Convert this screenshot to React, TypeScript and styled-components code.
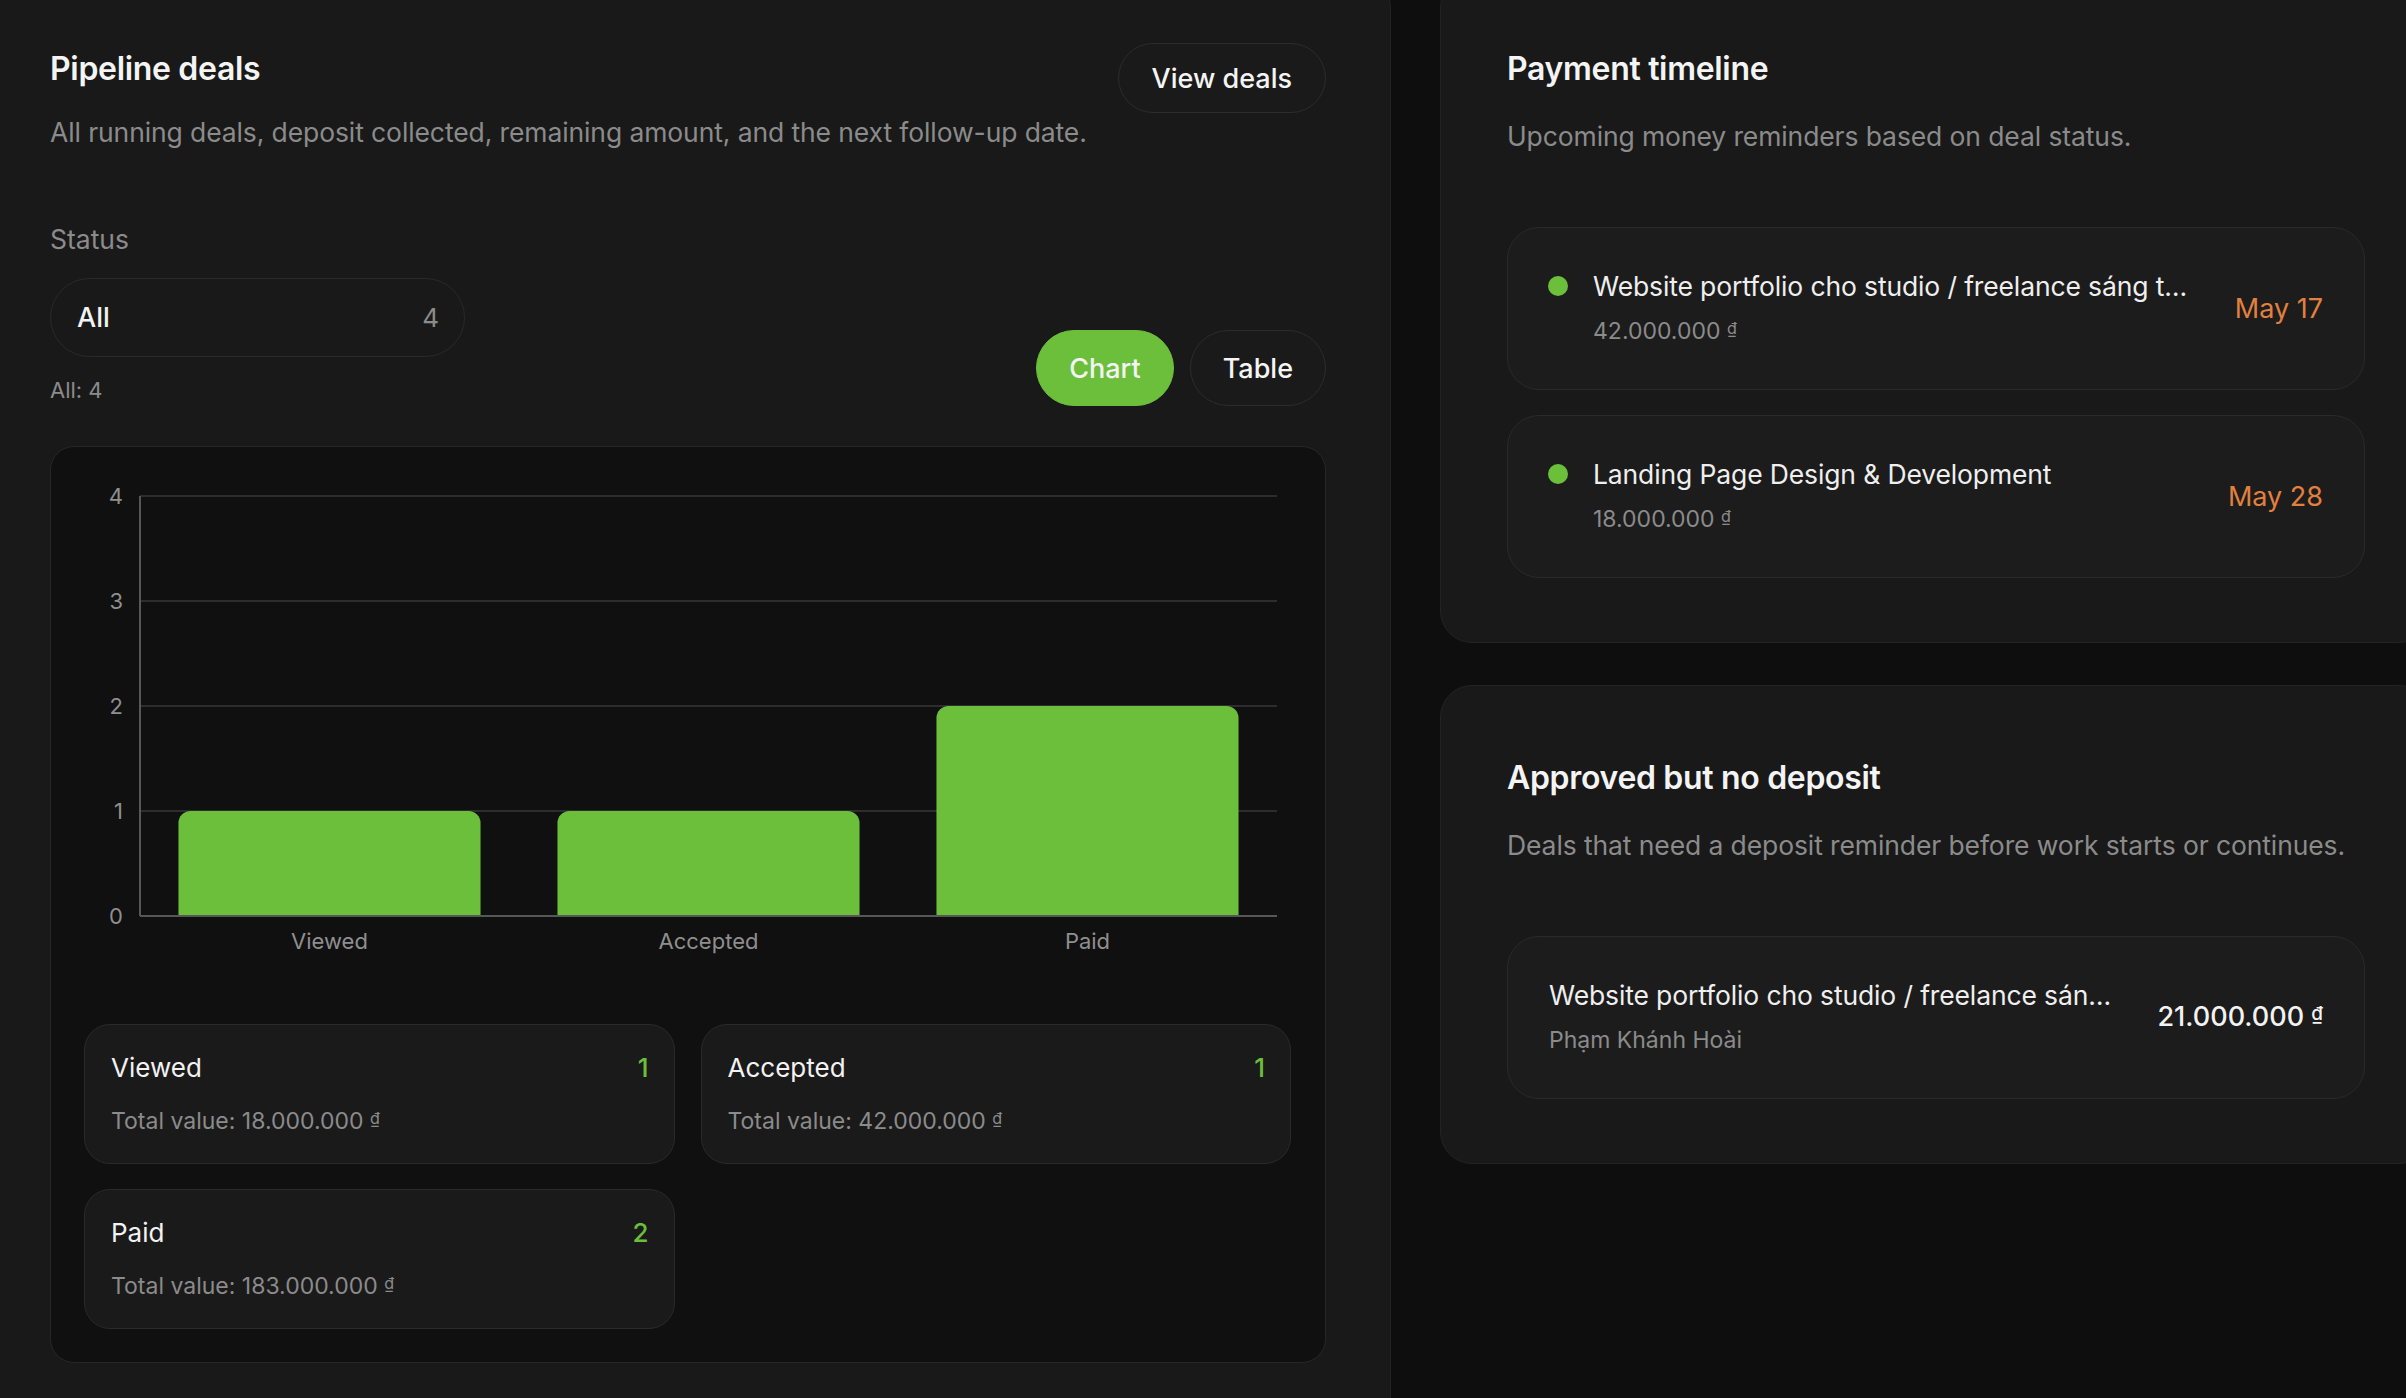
import styled, { createGlobalStyle } from 'styled-components';

const GlobalStyle = createGlobalStyle`
    * {
        box-sizing: border-box;
    }
    html, body {
        margin: 0;
        overflow: hidden;
        background: #0e0e0e;
    }
    body {
        font-family: Inter, "Noto Sans", sans-serif;
        color: #f2f2f2;
    }
`;

const Page = styled.div`
    display: flex;
    align-items: flex-start;
    gap: 49px;
    width: 2445px;
    margin: -24px 0 0 -14px;
`;

const Panel = styled.section`
    flex: 0 0 1405px;
    background: #191919;
    border: 1px solid #232323;
    border-radius: 32px;
    padding: 66px 64px 90px 63px;
`;

const RightColumn = styled.div`
    flex: 0 0 991px;
    display: flex;
    flex-direction: column;
    gap: 42px;
`;

const SideCard = styled.section`
    background: #191919;
    border: 1px solid #232323;
    border-radius: 32px;
    padding: 72px 65px 64px 66px;
`;

const Header = styled.div`
    display: flex;
    justify-content: space-between;
    align-items: flex-start;
    gap: 24px;
`;

const HeaderText = styled.div`
    min-width: 0;
`;

const Title = styled.h2<{ $offset?: number }>`
    margin: ${(p) => p.$offset ?? 0}px 0 0;
    font-size: 32px;
    line-height: 40px;
    font-weight: 600;
    letter-spacing: -0.01em;
    color: #f4f4f4;
`;

const Desc = styled.p<{ $gap: number }>`
    margin: ${(p) => p.$gap}px 0 0;
    font-size: 26.5px;
    line-height: 39px;
    letter-spacing: -0.004em;
    white-space: nowrap;
    color: #8b8b8b;
`;

const PillButton = styled.button<{ $active?: boolean; $tall?: boolean }>`
    flex-shrink: 0;
    height: ${(p) => (p.$tall ? 76 : 70)}px;
    padding: 0 ${(p) => (p.$tall ? 32 : 33)}px;
    border-radius: 999px;
    border: 1px solid ${(p) => (p.$active ? '#6cbf3b' : '#2c2c2c')};
    background: ${(p) => (p.$active ? '#6cbf3b' : '#1a1a1a')};
    color: #f4f4f4;
    font-family: inherit;
    font-size: 27px;
    font-weight: 500;
    white-space: nowrap;
    cursor: pointer;
`;

const FilterRow = styled.div`
    display: flex;
    justify-content: space-between;
    align-items: flex-end;
    margin-top: 68px;
`;

const FieldLabel = styled.div`
    font-size: 26.5px;
    line-height: 39px;
    color: #8b8b8b;
`;

const Select = styled.div`
    margin-top: 19px;
    width: 415px;
    height: 79px;
    border-radius: 40px;
    border: 1px solid #2a2a2a;
    background: #191919;
    display: flex;
    align-items: center;
    justify-content: space-between;
    padding: 0 25px 0 26px;
    font-size: 27px;
    font-weight: 500;
`;

const SelectCount = styled.span`
    font-size: 26px;
    font-weight: 400;
    color: #8b8b8b;
`;

const Hint = styled.div`
    margin-top: 17px;
    font-size: 22px;
    line-height: 32px;
    color: #8b8b8b;
`;

const Toggle = styled.div`
    display: flex;
    gap: 16px;
`;

const ChartBox = styled.div`
    margin-top: 40px;
    background: #101010;
    border: 1px solid #272727;
    border-radius: 24px;
    overflow: hidden;
`;

const ChartSvg = styled.svg`
    display: block;
    width: 100%;
    height: 577px;
`;

const StatGrid = styled.div`
    display: grid;
    grid-template-columns: 1fr 1fr;
    gap: 25px 26px;
    padding: 0 34px 33px 33px;
`;

const StatCard = styled.div`
    background: #1a1a1a;
    border: 1px solid #2a2a2a;
    border-radius: 26px;
    padding: 26px 25px 26px 26px;
    display: flex;
    flex-direction: column;
    gap: 20px;
`;

const StatHead = styled.div`
    display: flex;
    justify-content: space-between;
    font-size: 26px;
    line-height: 34px;
    font-weight: 400;
`;

const StatCount = styled.span`
    font-weight: 500;
    color: #6cbf3b;
`;

const Muted = styled.div<{ $gap?: number }>`
    margin-top: ${(p) => p.$gap ?? 0}px;
    font-size: 23px;
    line-height: 32px;
    color: #8b8b8b;
`;

const Dong = styled.span`
    font-size: 0.7em;
    line-height: 0;
    vertical-align: 0.32em;
`;

const ItemList = styled.div`
    margin-top: 71px;
    display: flex;
    flex-direction: column;
    gap: 25px;
`;

const Item = styled.div<{ $inset: number }>`
    display: flex;
    align-items: center;
    gap: 40px;
    padding: 41px 41px 42px ${(p) => p.$inset}px;
    background: #1c1c1c;
    border: 1px solid #2a2a2a;
    border-radius: 32px;
`;

const ItemMain = styled.div`
    flex: 1;
    min-width: 0;
    display: flex;
    align-items: flex-start;
    gap: 25px;
`;

const Dot = styled.span`
    flex: 0 0 20px;
    height: 20px;
    margin-top: 7px;
    border-radius: 50%;
    background: #6cbf3b;
`;

const ItemText = styled.div`
    flex: 1;
    min-width: 0;
`;

const ItemTitle = styled.div`
    font-size: 26.5px;
    line-height: 34px;
    font-weight: 400;
    letter-spacing: -0.005em;
    color: #efefef;
    white-space: nowrap;
    overflow: hidden;
    text-overflow: ellipsis;
`;

const DateTag = styled.span`
    flex-shrink: 0;
    font-size: 27px;
    font-weight: 400;
    color: #e2803f;
`;

const Amount = styled.span`
    flex-shrink: 0;
    font-size: 27px;
    line-height: 34px;
    font-weight: 500;
    color: #f2f2f2;
`;

const Money = ({ value }: { value: string }) => (
    <>
        {value} <Dong>₫</Dong>
    </>
);

const stages = [
    { label: 'Viewed', count: 1, total: '18.000.000' },
    { label: 'Accepted', count: 1, total: '42.000.000' },
    { label: 'Paid', count: 2, total: '183.000.000' },
];

const reminders = [
    { title: 'Website portfolio cho studio / freelance sáng t…', amount: '42.000.000', date: 'May 17' },
    { title: 'Landing Page Design & Development', amount: '18.000.000', date: 'May 28' },
];

// plot area inside the chart svg
const plot = { left: 89, right: 1226, top: 49, bottom: 469, max: 4 };

const barPath = (x: number, y: number, w: number, h: number, r: number) =>
    `M${x},${y + h} L${x},${y + r} A${r},${r} 0 0 1 ${x + r},${y} L${x + w - r},${y} A${r},${r} 0 0 1 ${x + w},${y + r} L${x + w},${y + h} Z`;

const StageChart = () => {
    const band = (plot.right - plot.left) / stages.length;
    const barW = band * 0.797;
    const step = (plot.bottom - plot.top) / plot.max;
    const ticks = [0, 1, 2, 3, 4];

    return (
        <ChartSvg viewBox="0 0 1274 577">
            {ticks.map((t) => {
                const y = plot.bottom - t * step;
                return (
                    <g key={t}>
                        {t > 0 && (
                            <line x1={plot.left} x2={plot.right} y1={y} y2={y} stroke="#2d2d2d" strokeWidth={2} />
                        )}
                        <text x={72} y={y + 8} textAnchor="end" fontSize={22} fill="#8f8f8f" fontFamily="Inter, sans-serif">
                            {t}
                        </text>
                    </g>
                );
            })}
            {stages.map((s, i) => {
                const x = plot.left + band * i + (band - barW) / 2;
                const h = s.count * step;
                return (
                    <g key={s.label}>
                        <path d={barPath(x, plot.bottom - h, barW, h, 12)} fill="#6cbf3b" />
                        <text
                            x={plot.left + band * i + band / 2}
                            y={502}
                            textAnchor="middle"
                            fontSize={22}
                            fill="#8f8f8f"
                            fontFamily="Inter, sans-serif"
                        >
                            {s.label}
                        </text>
                    </g>
                );
            })}
            <line x1={plot.left} x2={plot.left} y1={plot.top} y2={plot.bottom} stroke="#575757" strokeWidth={2} />
            <line x1={plot.left} x2={plot.right} y1={plot.bottom} y2={plot.bottom} stroke="#575757" strokeWidth={2} />
        </ChartSvg>
    );
};

const App = () => {
    return (
        <>
            <GlobalStyle />
            <Page>
                <Panel>
                    <Header>
                        <HeaderText>
                            <Title $offset={6}>Pipeline deals</Title>
                            <Desc $gap={24}>
                                All running deals, deposit collected, remaining amount, and the next follow-up date.
                            </Desc>
                        </HeaderText>
                        <PillButton>View deals</PillButton>
                    </Header>

                    <FilterRow>
                        <div>
                            <FieldLabel>Status</FieldLabel>
                            <Select>
                                <span>All</span>
                                <SelectCount>4</SelectCount>
                            </Select>
                            <Hint>All: 4</Hint>
                        </div>
                        <Toggle>
                            <PillButton $tall $active>Chart</PillButton>
                            <PillButton $tall>Table</PillButton>
                        </Toggle>
                    </FilterRow>

                    <ChartBox>
                        <StageChart />
                        <StatGrid>
                            {stages.map((s) => (
                                <StatCard key={s.label}>
                                    <StatHead>
                                        <span>{s.label}</span>
                                        <StatCount>{s.count}</StatCount>
                                    </StatHead>
                                    <Muted>
                                        Total value: <Money value={s.total} />
                                    </Muted>
                                </StatCard>
                            ))}
                        </StatGrid>
                    </ChartBox>
                </Panel>

                <RightColumn>
                    <SideCard>
                        <Title>Payment timeline</Title>
                        <Desc $gap={28}>Upcoming money reminders based on deal status.</Desc>
                        <ItemList>
                            {reminders.map((r) => (
                                <Item key={r.title} $inset={40}>
                                    <ItemMain>
                                        <Dot />
                                        <ItemText>
                                            <ItemTitle>{r.title}</ItemTitle>
                                            <Muted $gap={12}>
                                                <Money value={r.amount} />
                                            </Muted>
                                        </ItemText>
                                    </ItemMain>
                                    <DateTag>{r.date}</DateTag>
                                </Item>
                            ))}
                        </ItemList>
                    </SideCard>

                    <SideCard>
                        <Title>Approved but no deposit</Title>
                        <Desc $gap={28}>Deals that need a deposit reminder before work starts or continues.</Desc>
                        <ItemList>
                            <Item $inset={41}>
                                <ItemText>
                                    <ItemTitle>Website portfolio cho studio / freelance sán…</ItemTitle>
                                    <Muted $gap={12}>Phạm Khánh Hoài</Muted>
                                </ItemText>
                                <Amount>
                                    <Money value="21.000.000" />
                                </Amount>
                            </Item>
                        </ItemList>
                    </SideCard>
                </RightColumn>
            </Page>
        </>
    );
};

export default App;
